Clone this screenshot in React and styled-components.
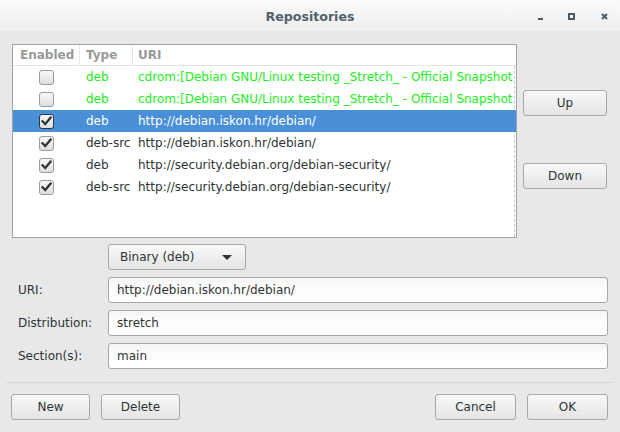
import React from 'react';
import styled, { createGlobalStyle } from 'styled-components';

const Global = createGlobalStyle`
  html, body { margin: 0; padding: 0; }
  body {
    width: 620px;
    height: 432px;
    overflow: hidden;
    background: #e8e8e8;
    font-family: "DejaVu Sans", "Liberation Sans", sans-serif;
    font-size: 12px;
    color: #2e3436;
  }
`;

const Window = styled.div`
  display: flex;
  flex-direction: column;
  width: 620px;
  height: 432px;
  background: #e8e8e8;
`;

const TitleBar = styled.div`
  height: 31px;
  display: flex;
  align-items: center;
  justify-content: center;
  position: relative;
  background: linear-gradient(#fbfbfb, #eeeeee);
`;

const Title = styled.div`
  font-family: "DejaVu Sans", sans-serif;
  font-weight: bold;
  font-size: 12.6px;
  color: #52606a;
  margin-top: 1px;
`;

const Controls = styled.div`
  position: absolute;
  left: 538px;
  top: 13px;
  display: flex;
  align-items: flex-end;
`;

const Ctl = styled.svg`
  display: block;
  margin-left: ${p => p.$ml || 0}px;
`;

const Body = styled.div`
  flex: 1;
  display: flex;
  flex-direction: column;
  padding: 13px 13px 0 12px;
`;

const TopRow = styled.div`
  display: flex;
  gap: 6px;
`;

const Tree = styled.div`
  width: 503px;
  height: 192px;
  border: 1px solid #a3a3a3;
  background: #fff;
  overflow: hidden;
  display: flex;
  flex-direction: column;
`;

const HeaderRow = styled.div`
  display: grid;
  grid-template-columns: 67px 53px 1fr;
  height: 20px;
  border-bottom: 1px solid #e3e3e3;
`;

const HeaderCell = styled.div`
  font-weight: bold;
  color: #999;
  padding-left: ${p => p.$pad}px;
  line-height: 20px;
  border-right: ${p => (p.$last ? 'none' : '1px solid #e6e6e6')};
`;

const Rows = styled.div`
  position: relative;
  flex: 1;
`;

const Clip = styled.div`
  position: absolute;
  top: 0;
  bottom: 0;
  right: 1px;
  border-right: 1px dashed #c6c6c6;
`;

const Row = styled.div`
  position: relative;
  display: grid;
  grid-template-columns: 67px 53px 1fr;
  height: 22px;
  align-items: center;
  background: ${p => (p.$selected ? '#4a90d9' : 'transparent')};
  color: ${p => (p.$selected ? '#fff' : p.$green ? '#22ee22' : '#2e3436')};
`;

const CheckCell = styled.div`
  display: flex;
  justify-content: center;
`;

const Check = styled.div`
  width: 13px;
  height: 13px;
  border: 1px solid ${p => (p.$selected ? '#2d3a44' : '#9c9c9c')};
  border-radius: 3px;
  background: linear-gradient(#f8f8f8, #dedede);
  display: flex;
  align-items: center;
  justify-content: center;
`;

const TypeCell = styled.div`
  padding-left: 6px;
  white-space: nowrap;
`;

const UriCell = styled.div`
  padding-left: 5px;
  white-space: nowrap;
  overflow: hidden;
  margin-right: 2px;
`;

const Side = styled.div`
  display: flex;
  flex-direction: column;
  padding-top: 46px;
`;

const Button = styled.button`
  width: ${p => p.$w || 84}px;
  height: 26px;
  border: 1px solid #a8a8a8;
  border-radius: 3px;
  background: linear-gradient(#f9f9f9, #e4e4e4);
  font-family: inherit;
  font-size: 12px;
  color: #2e3436;
  padding: 0;
  margin-top: ${p => p.$mt || 0}px;
`;

const Form = styled.div`
  display: grid;
  grid-template-columns: 96px 500px;
  row-gap: 7px;
  margin-top: 6px;
  align-items: center;
`;

const Label = styled.div`
  padding-left: 6px;
  color: #2e3436;
`;

const Combo = styled.div`
  grid-column: 2;
  width: 138px;
  height: 26px;
  box-sizing: border-box;
  border: 1px solid #a8a8a8;
  border-radius: 3px;
  background: linear-gradient(#f9f9f9, #e4e4e4);
  display: flex;
  align-items: center;
  justify-content: space-between;
  padding: 0 13px 0 11px;
`;

const Arrow = styled.div`
  width: 0;
  height: 0;
  border-left: 5px solid transparent;
  border-right: 5px solid transparent;
  border-top: 5px solid #2e3436;
`;

const Input = styled.div`
  height: 26px;
  box-sizing: border-box;
  border: 1px solid #a8a8a8;
  border-radius: 3px;
  background: linear-gradient(#f4f4f4, #fdfdfd 40%, #ffffff);
  padding-left: 8px;
  display: flex;
  align-items: center;
  color: #2e3436;
`;

const Separator = styled.div`
  height: 1px;
  background: #d6d6d6;
  margin: 13px -7px 0 -6px;
`;

const Footer = styled.div`
  display: flex;
  justify-content: space-between;
  padding-top: 11px;
  margin-left: -1px;
  margin-right: -1px;
`;

const Group = styled.div`
  display: flex;
  gap: 11px;
`;

const CheckMark = () => (
  <svg width="11" height="10" viewBox="0 0 11 10">
    <path d="M1.5 5.2 L4.2 8 L9.6 1.6" fill="none" stroke="#2e3436" strokeWidth="2.2" strokeLinecap="square" />
  </svg>
);

const rows = [
  { on: false, type: 'deb', uri: 'cdrom:[Debian GNU/Linux testing _Stretch_ - Official Snapshot amd64 DVD Binary-1]/ stretch contrib main', green: true },
  { on: false, type: 'deb', uri: 'cdrom:[Debian GNU/Linux testing _Stretch_ - Official Snapshot amd64 DVD Binary-1]/ stretch contrib main', green: true },
  { on: true, type: 'deb', uri: 'http://debian.iskon.hr/debian/', selected: true },
  { on: true, type: 'deb-src', uri: 'http://debian.iskon.hr/debian/' },
  { on: true, type: 'deb', uri: 'http://security.debian.org/debian-security/' },
  { on: true, type: 'deb-src', uri: 'http://security.debian.org/debian-security/' },
];

export default function App() {
  return (
    <Window>
      <Global />
      <TitleBar>
        <Title>Repositories</Title>
        <Controls>
          <Ctl width="5" height="3" viewBox="0 0 5 3"><rect x="0" y="1" width="5" height="2" fill="#4d5a63" /></Ctl>
          <Ctl $ml={25} width="7" height="7" viewBox="0 0 7 7"><rect x="1" y="1" width="5" height="5" fill="none" stroke="#4d5a63" strokeWidth="2" /></Ctl>
          <Ctl $ml={26} width="7" height="7" viewBox="0 0 7 7"><path d="M1 1 L6 6 M6 1 L1 6" stroke="#4d5a63" strokeWidth="2" /></Ctl>
        </Controls>
      </TitleBar>
      <Body>
        <TopRow>
          <Tree>
            <HeaderRow>
              <HeaderCell $pad={7}>Enabled</HeaderCell>
              <HeaderCell $pad={6}>Type</HeaderCell>
              <HeaderCell $pad={5} $last>URI</HeaderCell>
            </HeaderRow>
            <Rows>
              <Clip />
              {rows.map((r, i) => (
                <Row key={i} $selected={r.selected} $green={r.green}>
                  <CheckCell>
                    <Check $selected={r.selected}>{r.on && <CheckMark />}</Check>
                  </CheckCell>
                  <TypeCell>{r.type}</TypeCell>
                  <UriCell>{r.uri}</UriCell>
                </Row>
              ))}
            </Rows>
          </Tree>
          <Side>
            <Button>Up</Button>
            <Button $mt={47}>Down</Button>
          </Side>
        </TopRow>
        <Form>
          <Combo>
            <span>Binary (deb)</span>
            <Arrow />
          </Combo>
          <Label>URI:</Label>
          <Input>http://debian.iskon.hr/debian/</Input>
          <Label>Distribution:</Label>
          <Input>stretch</Input>
          <Label>Section(s):</Label>
          <Input>main</Input>
        </Form>
        <Separator />
        <Footer>
          <Group>
            <Button $w={79}>New</Button>
            <Button $w={79}>Delete</Button>
          </Group>
          <Group>
            <Button $w={81}>Cancel</Button>
            <Button $w={81}>OK</Button>
          </Group>
        </Footer>
      </Body>
    </Window>
  );
}
